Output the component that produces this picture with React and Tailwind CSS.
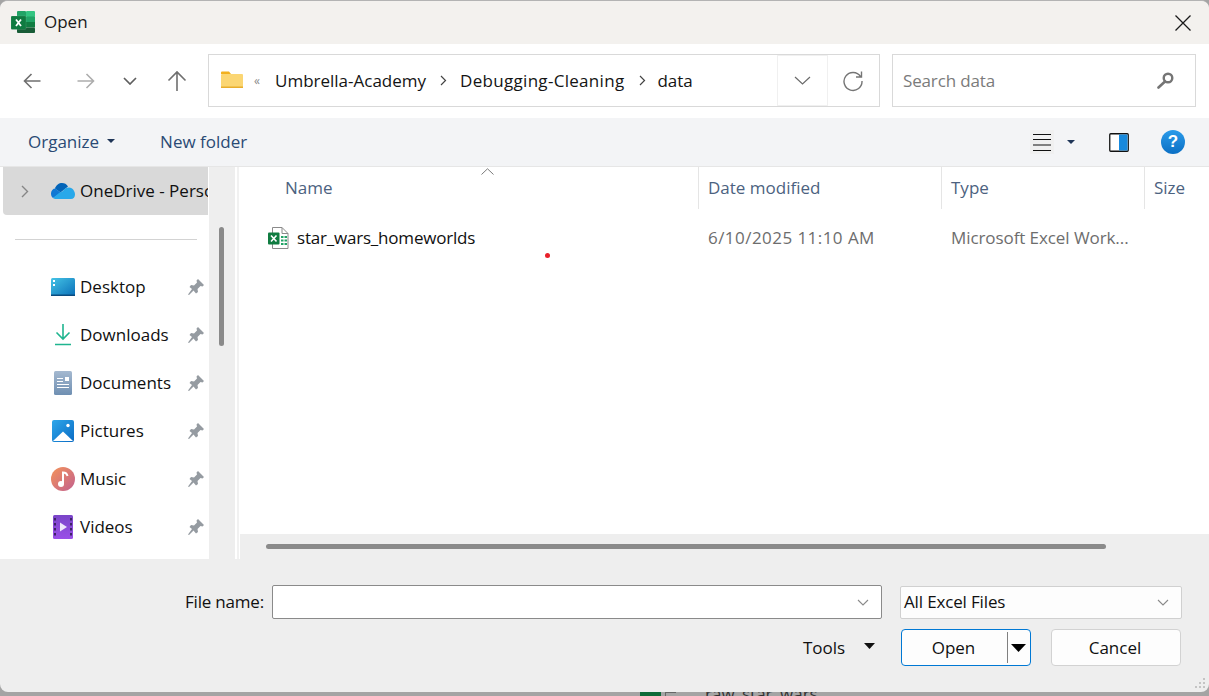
const F = { fontFamily: '"Open Sans","Noto Sans",sans-serif' };

function ExcelBig() {
  return (
    <svg width="24" height="22" viewBox="0 0 24 22" className="shrink-0 -mt-[1px]">
      <rect x="6" y="0" width="9" height="6" rx="1" fill="#21a366" />
      <rect x="15" y="0" width="9" height="6" rx="1" fill="#33c481" />
      <rect x="6" y="5.5" width="9" height="5.5" fill="#107c41" />
      <rect x="15" y="5.5" width="9" height="5.5" fill="#21a366" />
      <rect x="6" y="11" width="9" height="5.5" fill="#185c37" />
      <rect x="15" y="11" width="9" height="5.5" fill="#107c41" />
      <rect x="6" y="16.500" width="18" height="5.500" rx="1" fill="#185c37" />
      <rect x="0" y="5" width="15" height="13.500" rx="1" fill="#0f7b41" stroke="#fff" strokeOpacity="0.2" strokeWidth="0.5" />
      <path d="M5 8.500 L10 15 M10 8.500 L5 15" stroke="#fff" strokeWidth="1.800" />
    </svg>
  );
}
function ExcelFile() {
  return (
    <svg width="21" height="23" viewBox="0 0 21 23" className="shrink-0">
      <path d="M4.500 .5 H14 L20 6.500 V21.500 H4.500 Z" fill="#fff" stroke="#8a8a8a" />
      <path d="M14 .5 V6.500 H20" fill="none" stroke="#8a8a8a" />
      <path d="M13 9h2.500v2H13zM16.500 9H19v2h-2.500zM13 12.500h2.500v2H13zM16.500 12.500H19v2h-2.500zM13 16h2.500v2H13zM16.500 16H19v2h-2.500z" fill="#21a366" />
      <rect x="0" y="5.500" width="11.500" height="12" rx="1" fill="#107c41" />
      <path d="M3 8.500 L8.500 14.500 M8.500 8.500 L3 14.500" stroke="#fff" strokeWidth="1.600" />
    </svg>
  );
}
const Arrow = ({ color, flip }) => (
  <svg width="18" height="16" viewBox="0 0 18 16" className="block" style={{ transform: flip ? "scaleX(-1)" : undefined }}>
    <path d="M17.500 8H1.500M8.500 1 1.500 8l7 7" fill="none" stroke={color} strokeWidth="1.600" />
  </svg>
);
const Chev = ({ w = 14, h = 8, color = "#6b6b6b", sw = 1.6 }) => (
  <svg width={w} height={h} viewBox={`0 0 ${w} ${h}`} className="shrink-0">
    <path d={`M1 1 L${w / 2} ${h - 1} L${w - 1} 1`} fill="none" stroke={color} strokeWidth={sw} />
  </svg>
);
const Crumb = () => (
  <svg width="7" height="11" viewBox="0 0 7 11" className="shrink-0 block">
    <path d="M1 1l4.500 4.500L1 10" fill="none" stroke="#444" strokeWidth="1.200" />
  </svg>
);
const Tri = ({ w = 8, h = 4, color = "#1f3557" }) => (
  <svg width={w} height={h} viewBox={`0 0 ${w} ${h}`} className="shrink-0 block">
    <path d={`M0 0H${w}L${w / 2} ${h}Z`} fill={color} />
  </svg>
);
const Pin = () => (
  <svg width="16" height="16" viewBox="0 0 16 16" className="shrink-0 block">
    <path d="M10 0 16 6 14.500 7.500 12.500 7 9.500 10 10 13 8 14.500 5.500 11.500 1 16 0 15.500 4 10 1.500 8 3 6 6 6.500 9 3.500 8.500 1.500Z" fill="#959ba1" />
  </svg>
);

const Desktop = () => (
  <svg width="24" height="18" viewBox="0 0 24 18">
    <defs><linearGradient id="dk" x1="0" y1="0" x2="1" y2="1"><stop offset="0" stopColor="#45c4e6" /><stop offset="1" stopColor="#0a6fb8" /></linearGradient></defs>
    <rect width="24" height="18" rx="1.500" fill="url(#dk)" />
    <rect y="16.500" width="24" height="1.500" fill="#0b4c80" />
    <rect x="2" y="2" width="2" height="2" fill="#fff" /><rect x="2" y="6" width="2" height="2" fill="#fff" />
  </svg>
);
const Download = () => (
  <svg width="18" height="22" viewBox="0 0 18 22">
    <path d="M9 0V15M2.500 8.500 9 15l6.500-6.500M1 20.500H17" fill="none" stroke="#1fb58f" strokeWidth="1.600" />
  </svg>
);
const Doc = () => (
  <svg width="18" height="24" viewBox="0 0 18 24">
    <defs><linearGradient id="dc" x1="0" y1="0" x2="0" y2="1"><stop offset="0" stopColor="#a5b9d0" /><stop offset="1" stopColor="#6f8fb2" /></linearGradient></defs>
    <rect width="18" height="24" rx="1.500" fill="url(#dc)" />
    <path d="M3 7.500H9M3 10.500H9M3 13.500H15M3 16.500H15" stroke="#fff" strokeWidth="1" />
    <rect x="11" y="6" width="4" height="4" fill="#fff" />
  </svg>
);
const Pic = () => (
  <svg width="22" height="22" viewBox="0 0 22 22">
    <defs><linearGradient id="pc" x1="0" y1="0" x2="1" y2="1"><stop offset="0" stopColor="#2ea7ea" /><stop offset="1" stopColor="#0a6bc4" /></linearGradient></defs>
    <rect width="22" height="22" rx="2" fill="url(#pc)" />
    <path d="M1 21 11 11.500 21 21Z" fill="#fff" />
    <circle cx="16" cy="5.500" r="1.700" fill="#fff" />
  </svg>
);
const Music = () => (
  <svg width="24" height="24" viewBox="0 0 24 24">
    <defs><linearGradient id="ms" x1="0" y1="0" x2="1" y2="1"><stop offset="0" stopColor="#f4945a" /><stop offset="1" stopColor="#c2608f" /></linearGradient></defs>
    <circle cx="12" cy="12" r="12" fill="url(#ms)" />
    <circle cx="10" cy="17" r="3" fill="#fff" />
    <path d="M12 17V5.500c2 0 4 1 4.500 3.500" fill="none" stroke="#fff" strokeWidth="2" />
  </svg>
);
const Video = () => (
  <svg width="20" height="24" viewBox="0 0 20 24">
    <defs><linearGradient id="vd" x1="0" y1="0" x2="0" y2="1"><stop offset="0" stopColor="#7a45c8" /><stop offset="1" stopColor="#9a4fe8" /></linearGradient></defs>
    <rect width="20" height="24" rx="1.500" fill="url(#vd)" />
    <path d="M1 3h2v2.500H1zM1 8h2v2.500H1zM1 13h2v2.500H1zM1 18h2v2.500H1zM17 3h2v2.500h-2zM17 8h2v2.500h-2zM17 13h2v2.500h-2zM17 18h2v2.500h-2z" fill="#3d2466" />
    <path d="M7 7.500 14 12 7 16.500Z" fill="#efe6fb" />
  </svg>
);
const OneDrive = () => (
  <svg width="24" height="16" viewBox="0 0 24 16" className="shrink-0 block">
    <path d="M9.500 9.500 4 5.500C5 2 8 0 11 0c2.500 0 4.500 1 6 3.500z" fill="#0364b8" />
    <path d="M4.500 5.500C2 5.500 0 7.500 0 10.500c0 2 .8 3.700 2 4.500l8-5z" fill="#0f78d4" />
    <path d="M18 4.500c-3 0-5 1.500-6 3.500L8 10l-6 5c.8.7 2 1 3 1h15c2.500 0 4-2 4-4.500S22 4.500 18 4.500z" fill="#28a8ea" />
  </svg>
);

const nav = [
  { name: "Desktop", icon: <Desktop /> },
  { name: "Downloads", icon: <Download /> },
  { name: "Documents", icon: <Doc /> },
  { name: "Pictures", icon: <Pic /> },
  { name: "Music", icon: <Music /> },
  { name: "Videos", icon: <Video /> },
];

const cols = [
  { t: "Name", w: "w-[459px]", pl: "pl-[45px]" },
  { t: "Date modified", w: "w-[243px]", pl: "pl-[9px]" },
  { t: "Type", w: "w-[203px]", pl: "pl-[9px]" },
  { t: "Size", w: "flex-1", pl: "pl-[9px]" },
];

export default function App() {
  return (
    <div style={F} className="w-[1209px] h-[696px] overflow-hidden flex flex-col bg-[#a4a4a4] text-[17px] text-[#101010]">
      <div className="h-[692px] shrink-0 flex flex-col bg-[#eeeeee] rounded-lg border-t border-[#b3b3b3] overflow-hidden">
        {/* title bar */}
        <div className="h-[43px] shrink-0 bg-[#f3f1ee] flex items-center pl-[11px] pr-[18px]">
          <ExcelBig />
          <span className="ml-[9px] text-[#1a1a1a] -mt-[1px]">Open</span>
          <svg width="16" height="16" viewBox="0 0 16 16" className="ml-auto"><path d="M.5.5l15 15M15.500.5l-15 15" stroke="#1a1a1a" strokeWidth="1.300" /></svg>
        </div>

        {/* nav */}
        <div className="h-[74px] shrink-0 bg-white flex items-center pl-[23px] pr-[13px] pb-[1px]">
          <Arrow color="#6f6f6f" />
          <span className="ml-[36px]"><Arrow color="#adadad" flip /></span>
          <span className="ml-[28px]"><Chev w={14} h={8} color="#5f5f5f" sw={1.700} /></span>
          <svg width="20" height="21" viewBox="0 0 20 21" className="ml-[30px]"><path d="M10 21V2M1.500 10.500 10 2l8.500 8.500" fill="none" stroke="#6f6f6f" strokeWidth="1.600" /></svg>
          <div className="ml-[21px] w-[672px] h-[53px] border border-[#d9d9d9] flex items-center pl-[12px] text-[#141414]">
            <svg width="22" height="17" viewBox="0 0 22 17" className="shrink-0 -mt-[2px]">
              <path d="M0 1.500A1 1 0 0 1 1 .5H8l2 2.500H0z" fill="#f2b01e" />
              <rect y="3" width="22" height="14" rx="1" fill="#fbd673" />
              <rect y="15.500" width="22" height="1.500" fill="#e8ad2d" />
            </svg>
            <span className="ml-[11px] text-[12px] text-[#8a8a8a] w-[14px]">«</span>
            <span className="ml-[7px]">Umbrella-Academy</span>
            <span className="ml-[14px]"><Crumb /></span>
            <span className="ml-[13px] tracking-[0.3px]">Debugging-Cleaning</span>
            <span className="ml-[15px]"><Crumb /></span>
            <span className="ml-[11px]">data</span>
            <div className="ml-auto w-[51px] h-[51px] border border-[#f0f0f0] flex items-center justify-center"><Chev w={17} h={9} color="#6b6b6b" sw={1.200} /></div>
            <div className="w-[49px] mr-[2px] flex justify-center">
              <svg width="22" height="22" viewBox="0 0 22 22"><path d="M18.500 6.500A9 9 0 1 0 20 11M19.500 1.500v5.500h-5.500" fill="none" stroke="#757575" strokeWidth="1.400" /></svg>
            </div>
          </div>
          <div className="ml-[12px] flex-1 h-[53px] border border-[#d9d9d9] flex items-center pl-[10px] pr-[21px] text-[#7b7b7b] tracking-[-0.15px]">
            <span>Search data</span>
            <svg width="17" height="17" viewBox="0 0 17 17" className="ml-auto"><circle cx="11" cy="6" r="4.300" fill="none" stroke="#757575" strokeWidth="2.400" /><path d="M8 9.500 1.500 15.500" stroke="#757575" strokeWidth="2.600" strokeLinecap="round" /></svg>
          </div>
        </div>

        {/* toolbar */}
        <div className="h-[49px] shrink-0 bg-[#f3f4f6] border-b border-[#e6e6e6] flex items-center pl-[28px] pr-[24px] text-[#2a4a74]">
          <span>Organize</span>
          <span className="ml-[8px] -mt-[3px]"><Tri /></span>
          <span className="ml-[45px]">New folder</span>
          <div className="ml-auto w-[24px] h-[24px] bg-[#f0f0f0] flex items-center justify-center">
            <svg width="18" height="17" viewBox="0 0 18 17"><path d="M0 .5H18M0 5.500H18M0 11H18M0 16.500H18" stroke="#111" strokeWidth="1" /></svg>
          </div>
          <span className="ml-[13px]"><Tri /></span>
          <svg width="20" height="19" viewBox="0 0 20 19" className="ml-[34px]">
            <rect x=".75" y=".75" width="18.500" height="17.500" rx="1" fill="#fff" stroke="#111" strokeWidth="1.300" />
            <rect x="10" y="1.500" width="8.500" height="16" fill="#1789dd" />
          </svg>
          <div style={{ fontFamily: '"Liberation Sans",sans-serif' }} className="ml-[32px] w-[24px] h-[24px] rounded-full bg-gradient-to-b from-[#2a9bea] to-[#0a6fc4] text-white text-[17px] font-bold flex items-center justify-center">?</div>
        </div>

        {/* body */}
        <div className="h-[392px] shrink-0 flex overflow-hidden">
          <div className="w-[209px] shrink-0 bg-white overflow-hidden pl-[3px] pr-[1px]">
            <div className="h-[48px] bg-[#d9d9d9] rounded-bl-sm flex items-center pl-[18px] overflow-hidden whitespace-nowrap">
              <svg width="8" height="13" viewBox="0 0 8 13" className="shrink-0"><path d="M1 1l5.500 5.500L1 12" fill="none" stroke="#868686" strokeWidth="1.400" /></svg>
              <span className="ml-[22px]"><OneDrive /></span>
              <span className="ml-[5px]">OneDrive - Personal</span>
            </div>
            <div className="ml-[12px] mt-[24px] w-[182px] border-t border-[#d3d3d3]" />
            <div className="mt-[23px]">
              {nav.map((n) => (
                <div key={n.name} className="h-[48px] flex items-center">
                  <div className="ml-[47px] w-[26px] flex justify-center">{n.icon}</div>
                  <span className="ml-[4px]">{n.name}</span>
                  <span className="ml-auto mr-[4px]"><Pin /></span>
                </div>
              ))}
            </div>
          </div>
          <div className="w-[26px] shrink-0 bg-[#eeeeee] pt-[60px] pl-[10px]">
            <div className="w-[5px] h-[119px] rounded-full bg-[#8a8a8a]" />
          </div>
          <div className="w-[2px] shrink-0 bg-white" />
          <div className="w-[2px] shrink-0 bg-[#f1f1f1]" />
          <div className="flex-1 flex flex-col bg-white min-w-0 pl-[1px]">
            <div className="h-[367px] shrink-0 relative">
              <svg width="13" height="7" viewBox="0 0 13 7" className="absolute left-[241px] top-[1px]"><path d="M.5 6.500 6.500.8l6 5.700" fill="none" stroke="#7a7a7a" strokeWidth="1" /></svg>
              <div className="flex h-[42px] text-[#4c6280]">
                {cols.map((c) => (
                  <div key={c.t} className={`${c.w} ${c.pl} flex items-center border-r border-[#e5e5e5] last:border-r-0 shrink-0`}>{c.t}</div>
                ))}
              </div>
              <div className="flex items-center h-[48px] mt-[5px]">
                <div className="w-[459px] pl-[28px] flex items-center shrink-0">
                  <ExcelFile />
                  <span className="ml-[8px] text-[#101010] tracking-[-0.2px]">star_wars_homeworlds</span>
                </div>
                <div className="w-[243px] pl-[9px] shrink-0 text-[#6d6d6d] tracking-[0.45px] whitespace-nowrap">6/10/2025 11:10 AM</div>
                <div className="pl-[9px] text-[#6d6d6d] whitespace-nowrap tracking-[-0.08px]">Microsoft Excel Work...</div>
              </div>
              <div className="absolute left-[305px] top-[86px] w-[5px] h-[5px] rounded-full bg-[#e8202a]" />
            </div>
            <div className="flex-1 bg-[#eeeeee] pt-[10px] pl-[26px]">
              <div className="w-[840px] h-[5px] rounded-full bg-[#8a8a8a]" />
            </div>
          </div>
        </div>

        {/* footer */}
        <div className="flex-1 relative flex flex-col pt-[26px] pl-[185px] pr-[27px]">
          <div className="flex items-center h-[34px]">
            <span className="w-[87px] text-[#111] whitespace-nowrap tracking-[-0.2px]">File name:</span>
            <div className="w-[610px] h-[34px] bg-white border border-[#8a8a8a] rounded-[2px] flex items-center justify-end pr-[12px]">
              <Chev w={12} h={7} color="#8a8a8a" sw={1.100} />
            </div>
            <div className="ml-[18px] w-[282px] h-[33px] bg-[#fdfdfd] border border-[#d0d0d0] rounded-[2px] flex items-center pl-[3px] pr-[12px]">
              <span className="tracking-[-0.15px]">All Excel Files</span>
              <span className="ml-auto"><Chev w={12} h={7} color="#8a8a8a" sw={1.100} /></span>
            </div>
          </div>
          <div className="flex items-center h-[37px] mt-[10px]">
            <span className="ml-[618px] w-[45px] pt-[1px]">Tools</span>
            <span className="ml-[16px] -mt-[3px]"><Tri w={11} h={6} color="#111" /></span>
            <div className="ml-[26px] w-[130px] h-[37px] bg-[#fdfdfd] border border-[#0078d4] rounded-[4px] flex items-center">
              <span className="w-[105px] text-center pt-[1px] pr-[2px]">Open</span>
              <div className="w-[1px] h-[31px] bg-[#808080]" />
              <span className="ml-[3px]"><Tri w={15} h={8} color="#000" /></span>
            </div>
            <div className="ml-[20px] w-[130px] h-[37px] bg-[#fdfdfd] border border-[#d2d2d2] rounded-[4px] flex items-center justify-center pt-[1px] pr-[2px]">Cancel</div>
          </div>
          <svg width="12" height="12" viewBox="0 0 12 12" className="absolute right-[2px] bottom-[2px]">
            <path d="M8 0h2v2H8zM4 4h2v2H4zM8 4h2v2H8zM0 8h2v2H0zM4 8h2v2H4zM8 8h2v2H8z" fill="#c4c4c4" />
          </svg>
        </div>
      </div>
      <div className="h-[4px] shrink-0 overflow-hidden flex pl-[640px] bg-[#a4a4a4]">
        <div className="w-[21px] h-[4px] bg-[#0f6a38]" />
        <div className="ml-[4px] w-[11px] h-[4px] border-l border-t border-[#666]" />
        <span className="ml-[29px] -mt-[7px] text-[#333] leading-none whitespace-nowrap">raw_star_wars</span>
      </div>
    </div>
  );
}
